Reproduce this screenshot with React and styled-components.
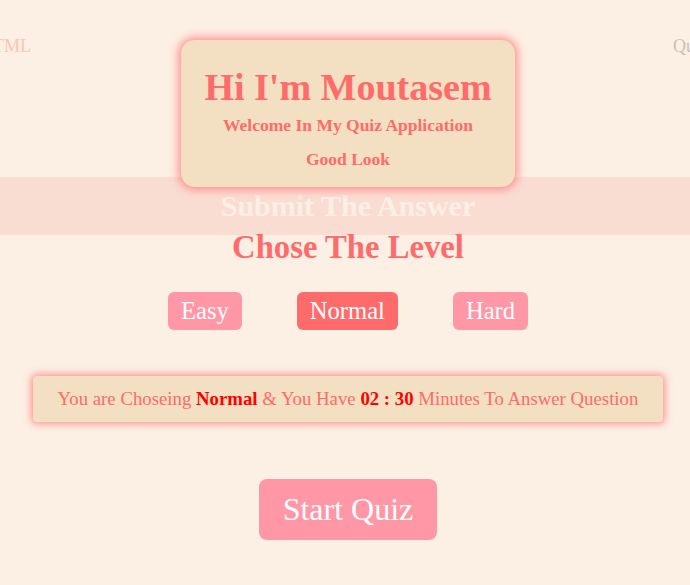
import styled, { createGlobalStyle } from "styled-components";

const GlobalStyle = createGlobalStyle`
  html, body {
    margin: 0;
    padding: 0;
    background-color: #fcefe4;
    font-family: "Liberation Serif", "Times New Roman", serif;
  }
  * {
    box-sizing: border-box;
  }
`;

const SPage = styled.div`
  width: 690px;
  overflow: hidden;
`;

const SHeader = styled.header`
  position: relative;
  height: 177px;
`;

const SNav = styled.nav`
  display: flex;
  justify-content: space-between;
  align-items: center;
  height: 92px;
  font-size: 18px;
`;

const SNavItem = styled.span`
  color: ${(props) => props.color};
  margin: ${(props) => props.margin};
`;

const SWelcomeCard = styled.div`
  position: absolute;
  top: 40px;
  left: 181px;
  width: 334px;
  height: 147px;
  z-index: 2;
  background-color: #f3dfc1;
  border-radius: 14px;
  box-shadow: 0 0 8px 3px rgba(255, 120, 120, 0.75);
  text-align: center;
  color: #ff6b6b;
  padding: 26px 6px 0;
  h1 {
    font-size: 38px;
    margin: 0 0 7px;
    line-height: 42px;
  }
  p {
    font-size: 17.5px;
    font-weight: 700;
    margin: 0 0 14px;
    line-height: 20px;
  }
`;

const SBand = styled.div`
  height: 58px;
  background-color: #f9ddd2;
  display: flex;
  justify-content: center;
  align-items: center;
  padding-left: 6px;
  h2 {
    margin: 0;
    font-size: 30px;
    color: #fdeee6;
  }
`;

const SMain = styled.main`
  display: flex;
  flex-direction: column;
  align-items: center;
  padding-left: 6px;
`;

const STitle = styled.h2`
  margin: -6px 0 0;
  font-size: 32.7px;
  color: #ff6b6b;
`;

const SLevels = styled.div`
  display: flex;
  gap: 55px;
  margin-top: 26px;
`;

const SLevelButton = styled.button`
  font-family: inherit;
  font-size: 24.6px;
  line-height: 28px;
  color: #fff;
  border: none;
  border-radius: 6px;
  padding: 5px 13px;
  height: 38px;
  cursor: pointer;
  background-color: ${(props) => (props.active ? "#ff6b6b" : "#ff97a6")};
`;

const SInfo = styled.div`
  width: 630px;
  margin-top: 46px;
  padding: 12px 0;
  background-color: #f3dfc1;
  border-radius: 4px;
  box-shadow: 0 0 7px 2px rgba(255, 110, 110, 0.7);
  text-align: center;
  font-size: 18.8px;
  line-height: 22px;
  color: #ff6b6b;
  b {
    color: #ff0000;
  }
`;

const SStartButton = styled.button`
  margin-top: 57px;
  font-family: inherit;
  font-size: 32px;
  line-height: 37px;
  color: #fff;
  background-color: #ff97a6;
  border: none;
  border-radius: 8px;
  padding: 12px 24px;
  cursor: pointer;
`;

const levels = ["Easy", "Normal", "Hard"];

const App = () => {
  const current = "Normal";
  return (
    <>
      <GlobalStyle />
      <SPage>
        <SHeader>
          <SNav>
            <SNavItem color="#fbc4b8" margin="0 0 0 -20px">
              HTML
            </SNavItem>
            <SNavItem color="#c9bfb6" margin="0 -18px 0 0">
              Quiz
            </SNavItem>
          </SNav>
          <SWelcomeCard>
            <h1>Hi I'm Moutasem</h1>
            <p>Welcome In My Quiz Application</p>
            <p>Good Look</p>
          </SWelcomeCard>
        </SHeader>
        <SBand>
          <h2>Submit The Answer</h2>
        </SBand>
        <SMain>
          <STitle>Chose The Level</STitle>
          <SLevels>
            {levels.map((level) => (
              <SLevelButton key={level} active={level === current}>
                {level}
              </SLevelButton>
            ))}
          </SLevels>
          <SInfo>
            You are Choseing <b>{current}</b> &amp; You Have <b>02 : 30</b>{" "}
            Minutes To Answer Question
          </SInfo>
          <SStartButton>Start Quiz</SStartButton>
        </SMain>
      </SPage>
    </>
  );
};

export default App;
